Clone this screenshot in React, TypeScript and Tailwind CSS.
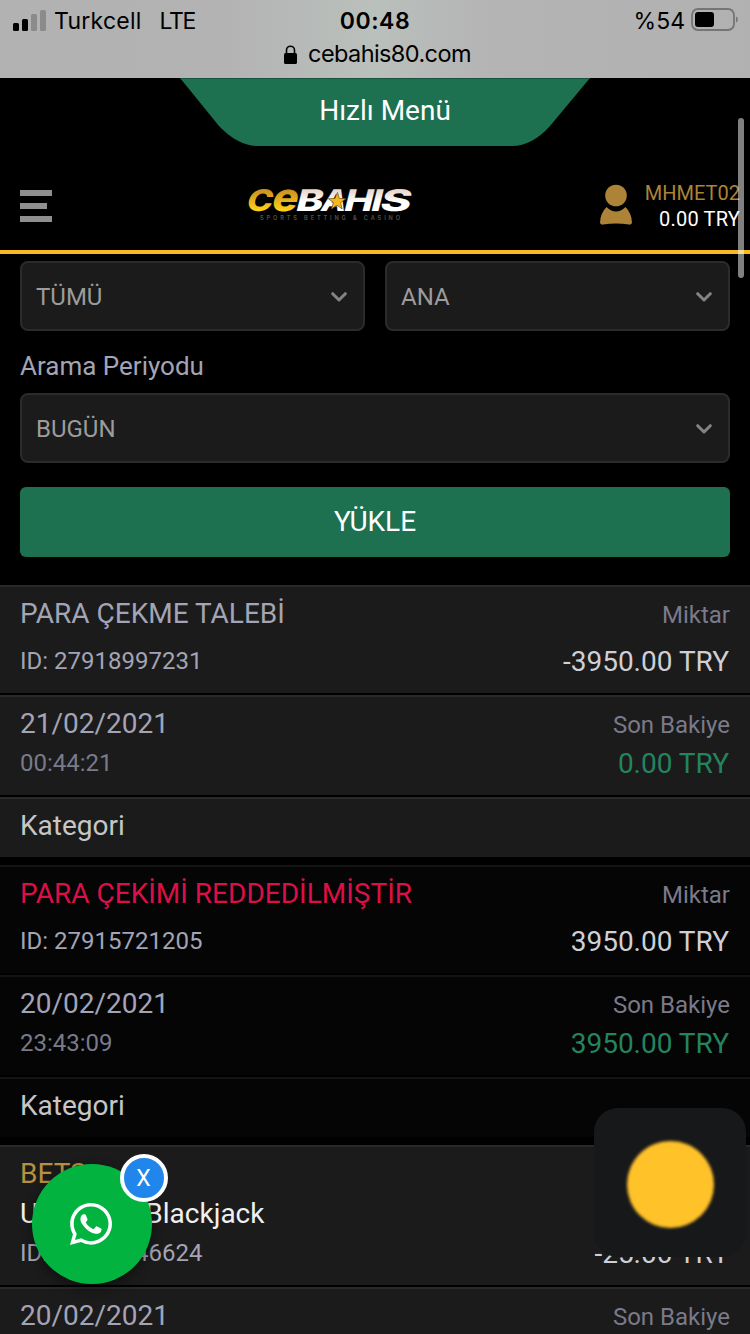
import React from "react";
import { FaWhatsapp } from "react-icons/fa";

type Tone = "muted" | "red" | "gold";

interface Transaction {
  title: string;
  tone: Tone;
  id: string;
  amount: string;
  date: string;
  time: string;
  balance: string;
  dark?: boolean;
}

const transactions: Transaction[] = [
  {
    title: "PARA ÇEKME TALEBİ",
    tone: "muted",
    id: "27918997231",
    amount: "-3950.00 TRY",
    date: "21/02/2021",
    time: "00:44:21",
    balance: "0.00 TRY",
  },
  {
    title: "PARA ÇEKİMİ REDDEDİLMİŞTİR",
    tone: "red",
    id: "27915721205",
    amount: "3950.00 TRY",
    date: "20/02/2021",
    time: "23:43:09",
    balance: "3950.00 TRY",
    dark: true,
  },
];

// last card on the screen, only its first rows are in view
const lastBet = {
  title: "BETS",
  game: "Unlimited Blackjack",
  id: "27915746624",
  amount: "-25.00 TRY",
  date: "20/02/2021",
};

const toneClass: Record<Tone, string> = {
  muted: "text-[#a3a4b5]",
  red: "text-[#dc0f48]",
  gold: "text-[#b8913f]",
};

const StatusBar = () => (
  <div className="h-[78px] bg-[linear-gradient(90deg,#b2b2b2_0%,#b3b3b3_30%,#bac0bc_50%,#b4b4b4_65%,#b1b1b2_100%)] font-['Inter',sans-serif] text-black">
    <div className="grid grid-cols-3 h-10 pt-[3px] items-center text-[23px]">
      <div className="flex items-center pl-[13px]">
        <svg width="33" height="22" viewBox="0 0 33 22" className="mr-2 -mt-0.5">
          <rect x="0" y="13" width="6" height="8" rx="1.5" />
          <rect x="9" y="9" width="6" height="12" rx="1.5" />
          <rect x="18" y="4" width="6" height="17" rx="1.5" fill="#8b8b8c" />
          <rect x="27" y="0" width="6" height="21" rx="1.5" fill="#8b8b8c" />
        </svg>
        <span className="tracking-[0.25px]">Turkcell</span>
        <span className="ml-[18px] tracking-[-1.3px]">LTE</span>
      </div>
      <div className="text-center font-semibold tracking-[0.6px]">00:48</div>
      <div className="flex items-center justify-end pr-[11px]">
        <span>%54</span>
        <svg width="48" height="24" viewBox="0 0 48 24" className="ml-1.5 -mt-[3px]">
          <rect x="1" y="1" width="42" height="21" rx="6" fill="none" stroke="#757575" strokeWidth="1.8" />
          <rect x="4" y="4" width="19" height="15" rx="3" />
          <path d="M45 8.5c2.4 1 2.4 5 0 6z" fill="#757575" />
        </svg>
      </div>
    </div>
    <div className="flex justify-center items-center h-7 pl-[5px] text-[23.5px]">
      <svg width="13" height="19" viewBox="0 0 13 19" className="mr-[11px]">
        <rect x="0" y="8" width="13" height="11" rx="1.6" />
        <path d="M2.5 9V5.2a4 4 0 0 1 8 0V9" fill="none" stroke="#000" strokeWidth="1.6" />
      </svg>
      <span className="tracking-[-0.6px]">cebahis80.com</span>
    </div>
  </div>
);

const Logo = () => (
  <svg width="176" height="40" viewBox="0 0 176 40" className="overflow-visible font-['Inter',sans-serif]">
    <defs>
      <linearGradient id="gold" gradientUnits="userSpaceOnUse" x1="0" y1="8" x2="0" y2="30">
        <stop offset="0" stopColor="#c98d1f" />
        <stop offset="1" stopColor="#ffd21c" />
      </linearGradient>
      <linearGradient id="pale" gradientUnits="userSpaceOnUse" x1="0" y1="8" x2="0" y2="30">
        <stop offset="0" stopColor="#e6d3c8" />
        <stop offset="0.6" stopColor="#ffffff" />
      </linearGradient>
    </defs>
    <g transform="skewX(-14)" fontWeight="800" fontSize="30">
      <text x="9.500" y="30" fill="url(#gold)" textLength="26" lengthAdjust="spacingAndGlyphs">C</text>
      <text x="34.500" y="30" fontSize="39" fill="url(#gold)" textLength="26" lengthAdjust="spacingAndGlyphs">e</text>
      <text x="59" y="30" fill="url(#pale)" textLength="27" lengthAdjust="spacingAndGlyphs">B</text>
      <text x="84" y="30" fill="url(#pale)" textLength="25" lengthAdjust="spacingAndGlyphs">A</text>
      <text x="107" y="30" fill="url(#pale)" textLength="29" lengthAdjust="spacingAndGlyphs">H</text>
      <text x="134" y="30" fill="url(#pale)" textLength="11" lengthAdjust="spacingAndGlyphs">I</text>
      <text x="143" y="30" fill="url(#pale)" textLength="31" lengthAdjust="spacingAndGlyphs">S</text>
    </g>
    <path d="M94.500 11.500l1.800 6 6.500.2-5.200 4 1.600 6.200-5.200-3.600-5.600 3.600 2-6.300-5-3.900 6.500-.2z" fill="#f5b81c" stroke="#6b4a10" strokeWidth="0.7" />
    <text x="17" y="38.500" fontSize="5.600" fontWeight="600" fill="#5d5048" textLength="140">
      SPORTS BETTING &amp; CASINO
    </text>
  </svg>
);

const Header = () => (
  <header className="border-b-4 border-[#f9b921]">
    <div className="grid ml-[180px] w-[410px] h-[68px]">
      <svg width="410" height="68" viewBox="0 0 410 68" className="col-start-1 row-start-1">
        <path d="M0 0H410L370 48Q352 68 332 68H78Q58 68 39 48Z" fill="#1d7151" />
        <path d="M0 0H410V1H1Z" fill="#17523c" />
      </svg>
      <span className="col-start-1 row-start-1 z-10 pt-[17px] text-center text-[28px] leading-8 text-white">
        Hızlı Menü
      </span>
    </div>
    <div className="flex items-start h-[104px] pl-5">
      <svg width="32" height="32" viewBox="0 0 32 32" fill="#8f8f8f" className="mt-11">
        <rect y="0" width="32" height="6" />
        <rect y="13" width="27" height="6" />
        <rect y="26" width="32" height="6" />
      </svg>
      <div className="ml-[191px] mt-[35px]">
        <Logo />
      </div>
      <svg width="32" height="41" viewBox="0 0 32 41" fill="#ad8338" className="ml-[181px] mt-[38px]">
        <circle cx="16" cy="11.5" r="10.8" />
        <path d="M6.5 23Q16 32 25.500 23Q31.500 29 32 38.500Q31.800 41 29 40.600Q16 38.500 3 40.600Q.2 41 0 38.500Q.5 29 6.500 23Z" />
      </svg>
      <div className="flex-1 mt-[34px] pr-2.5 text-right text-xl leading-[26px]">
        <div className="text-[#ad8338]">MHMET02</div>
        <div className="text-white tracking-[0.2px]">0.00 TRY</div>
      </div>
    </div>
  </header>
);

const SelectBox = ({ value }: { value: string }) => (
  <div className="flex flex-1 items-center justify-between h-[70px] pt-0.5 pl-3.5 pr-4 rounded-lg border-2 border-[#2b2b2b] bg-[#1b1b1b] text-2xl text-[#9c9c9c]">
    <span>{value}</span>
    <svg width="16" height="10" viewBox="0 0 16 10" fill="none" stroke="#848484" strokeWidth="3" strokeLinecap="round" strokeLinejoin="round">
      <path d="M1.700 1.700L8 8L14.300 1.700" />
    </svg>
  </div>
);

const Filters = () => (
  <section className="px-5 pt-[7px]">
    <div className="flex gap-5">
      <SelectBox value="TÜMÜ" />
      <SelectBox value="ANA" />
    </div>
    <div className="pt-5 pb-3 text-[26px] leading-[30px] text-[#a3a4b5]">Arama Periyodu</div>
    <div className="flex">
      <SelectBox value="BUGÜN" />
    </div>
    <button className="mt-6 w-full h-[70px] rounded-md bg-[#1d7151] text-[28px] text-white">
      YÜKLE
    </button>
  </section>
);

const TransactionCard = ({ item }: { item: Transaction }) => {
  const row = item.dark
    ? "flex justify-between px-5 border-t-2 border-[#141414] bg-[#050505]"
    : "flex justify-between px-5 border-t-2 border-[#292929] bg-[#1b1b1b]";

  return (
    <article className="flex flex-col gap-0.5 text-[28px] leading-[34px]">
      <div className={`${row} h-[108px]`}>
        <div className="pt-2.5">
          <div className={toneClass[item.tone]}>{item.title}</div>
          <div className="mt-4 text-2xl leading-7 text-[#a3a4b5]">ID: {item.id}</div>
        </div>
        <div className="pt-3.5 text-right">
          <div className="text-2xl leading-7 text-[#797a8a]">Miktar</div>
          <div className="mt-4 pr-px text-[#cfcfd4]">{item.amount}</div>
        </div>
      </div>

      <div className={`${row} h-[100px]`}>
        <div className="pt-2.5">
          <div className="text-[#a3a4b5]">{item.date}</div>
          <div className="mt-2 text-2xl leading-7 text-[#797a8a]">{item.time}</div>
        </div>
        <div className="pt-3.5 text-right">
          <div className="text-2xl leading-7 text-[#797a8a]">Son Bakiye</div>
          <div className="mt-2 pr-px text-[#23845f]">{item.balance}</div>
        </div>
      </div>

      <div className={`${row} h-[60px] pt-2.5 text-[#c6c6c6]`}>Kategori</div>
    </article>
  );
};

const BetCard = () => (
  <article className="flex flex-col gap-0.5 text-[28px] leading-[34px]">
    <div className="flex justify-between h-[140px] px-5 border-t-2 border-[#292929] bg-[#1b1b1b]">
      <div className="pt-2.5">
        <div className={toneClass.gold}>{lastBet.title}</div>
        <div className="mt-1.5 text-[#f0f0f0]">{lastBet.game}</div>
        <div className="mt-2 text-2xl leading-7 text-[#a3a4b5]">ID: {lastBet.id}</div>
      </div>
      <div className="pt-3.5 text-right">
        <div className="text-2xl leading-7 text-[#797a8a]">Miktar</div>
        <div className="mt-12 pr-px text-[#cfcfd4]">{lastBet.amount}</div>
      </div>
    </div>
    <div className="flex justify-between h-[47px] px-5 border-t-2 border-[#292929] bg-[#1b1b1b]">
      <div className="pt-2.5 text-[#a3a4b5]">{lastBet.date}</div>
      <div className="pt-3.5 text-2xl leading-7 text-[#797a8a]">Son Bakiye</div>
    </div>
  </article>
);

const App = () => {
  return (
    <main className="relative w-[750px] h-[1334px] overflow-hidden bg-black font-['Roboto',sans-serif]">
      <StatusBar />
      <Header />
      <Filters />

      {/* TRANSACTIONS */}
      <section className="flex flex-col gap-2 mt-7">
        {transactions.map((item) => (
          <TransactionCard key={item.id} item={item} />
        ))}
        <BetCard />
      </section>

      {/* SCROLLBAR */}
      <div className="absolute left-[738px] top-[118px] w-1.5 h-40 rounded-full bg-[#ffffff80]" />

      {/* WHATSAPP */}
      <div className="absolute left-8 top-[1164px] flex items-center justify-center size-[120px] rounded-full bg-[#02b340] shadow-[0_4px_12px_rgba(0,0,0,0.4)]">
        <FaWhatsapp className="size-12 -ml-0.5 text-white" />
      </div>
      <div className="absolute left-[120px] top-[1154px] flex items-center justify-center size-12 pt-[3px] pr-px rounded-full border-4 border-white bg-[#2186eb] text-[23px] text-white">
        X
      </div>

      {/* ASSISTIVE BUTTON */}
      <div className="absolute left-[594px] top-[1108px] flex items-center justify-center w-[152px] h-[149px] rounded-3xl bg-[#17181a]">
        <div className="size-[87px] mt-[3px] rounded-full bg-[#ffc229] blur-[1.5px]" />
      </div>
    </main>
  );
};

export default App;
